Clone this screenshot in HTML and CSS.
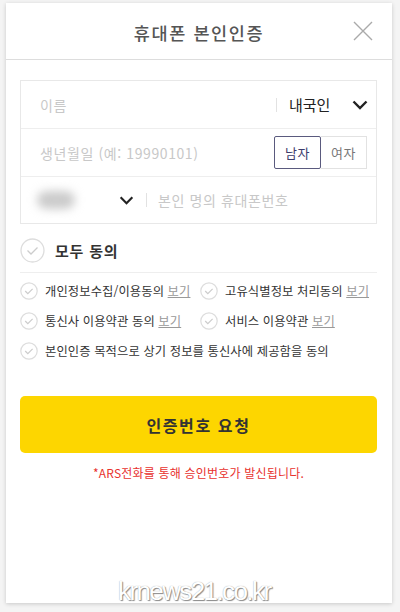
FILE: index.html
```html
<!DOCTYPE html>
<html lang="ko">
<head>
  <meta charset="UTF-8">
  <meta name="viewport" content="width=device-width, initial-scale=1.0">
  <title>휴대폰 본인인증</title>
  <link rel="stylesheet" href="styles.css">
</head>
<body>
  <div class="card">
    <div class="header">
      <h1>휴대폰 본인인증</h1>
      <span class="close">
        <svg width="20" height="20" viewBox="0 0 20 20"><path d="M1 1 L19 19 M19 1 L1 19" stroke="#aaa" stroke-width="1.4" fill="none"/></svg>
      </span>
    </div>
    <div class="content">
      <div class="form-box">
        <div class="row">
          <span class="placeholder name">이름</span>
          <span class="divider"></span>
          <span class="nation">내국인</span>
          <svg class="chev" width="16" height="10" viewBox="0 0 16 10"><path d="M1.5 1.5 L8 8 L14.5 1.5" stroke="#222" stroke-width="2.4" fill="none"/></svg>
        </div>
        <div class="row">
          <span class="placeholder birth">생년월일 (예: 19990101)</span>
          <div class="gender">
            <span class="g-btn on">남자</span>
            <span class="g-btn">여자</span>
          </div>
        </div>
        <div class="row">
          <span class="blob"></span>
          <svg class="chev small" width="15" height="9" viewBox="0 0 16 10"><path d="M1.5 1.5 L8 8 L14.5 1.5" stroke="#222" stroke-width="2.4" fill="none"/></svg>
          <span class="divider"></span>
          <span class="placeholder phone">본인 명의 휴대폰번호</span>
        </div>
      </div>

      <div class="agree-all">
        <svg class="check big" width="25" height="25" viewBox="0 0 25 25"><circle cx="12.5" cy="12.5" r="11.5" stroke="#ddd" stroke-width="1.3" fill="#fff"/><path d="M7.5 12.5 L11 16 L17.5 9.5" stroke="#ccc" stroke-width="1.3" fill="none"/></svg>
        <span>모두 동의</span>
      </div>

      <div class="terms">
        <div class="term"><svg class="check" width="18" height="18" viewBox="0 0 18 18"><circle cx="9" cy="9" r="8.2" stroke="#ddd" stroke-width="1.2" fill="#fff"/><path d="M5.2 9 L7.8 11.6 L12.6 6.8" stroke="#ccc" stroke-width="1.2" fill="none"/></svg><span>개인정보수집/이용동의 <a href="#">보기</a></span></div>
        <div class="term"><svg class="check" width="18" height="18" viewBox="0 0 18 18"><circle cx="9" cy="9" r="8.2" stroke="#ddd" stroke-width="1.2" fill="#fff"/><path d="M5.2 9 L7.8 11.6 L12.6 6.8" stroke="#ccc" stroke-width="1.2" fill="none"/></svg><span>고유식별정보 처리동의 <a href="#">보기</a></span></div>
        <div class="term"><svg class="check" width="18" height="18" viewBox="0 0 18 18"><circle cx="9" cy="9" r="8.2" stroke="#ddd" stroke-width="1.2" fill="#fff"/><path d="M5.2 9 L7.8 11.6 L12.6 6.8" stroke="#ccc" stroke-width="1.2" fill="none"/></svg><span>통신사 이용약관 동의 <a href="#">보기</a></span></div>
        <div class="term"><svg class="check" width="18" height="18" viewBox="0 0 18 18"><circle cx="9" cy="9" r="8.2" stroke="#ddd" stroke-width="1.2" fill="#fff"/><path d="M5.2 9 L7.8 11.6 L12.6 6.8" stroke="#ccc" stroke-width="1.2" fill="none"/></svg><span>서비스 이용약관 <a href="#">보기</a></span></div>
        <div class="term wide"><svg class="check" width="18" height="18" viewBox="0 0 18 18"><circle cx="9" cy="9" r="8.2" stroke="#ddd" stroke-width="1.2" fill="#fff"/><path d="M5.2 9 L7.8 11.6 L12.6 6.8" stroke="#ccc" stroke-width="1.2" fill="none"/></svg><span>본인인증 목적으로 상기 정보를 통신사에 제공함을 동의</span></div>
      </div>

      <button class="request">인증번호 요청</button>
      <p class="notice">*ARS전화를 통해 승인번호가 발신됩니다.</p>
    </div>
    <div class="watermark">krnews21.co.kr</div>
  </div>
</body>
</html>
```

FILE: styles.css
```css
* { box-sizing: border-box; }
body { margin: 0; padding: 3px 8px 0 6px; background-color: #f4f4f4; font-family: "Noto Sans CJK KR", "Noto Sans", sans-serif; height: 612px; overflow: hidden; }
.card { position: relative; background-color: #fff; height: 600px; box-shadow: 0 1px 4px rgba(0,0,0,0.18); }
.header { height: 57px; border-bottom: 1px solid #ddd; display: flex; align-items: center; justify-content: center; position: relative; }
.header h1 { margin: 0; font-size: 17.5px; font-weight: 500; color: #555; letter-spacing: 1.6px; padding-top: 2px; }
.header .close { position: absolute; right: 19px; top: 18px; }
.content { padding: 20px 15px 0 14px; }
.form-box { border: 1px solid #e8e8e8; }
.row { height: 48px; display: flex; align-items: center; border-bottom: 1px solid #eee; font-size: 14px; }
.row:last-child { border-bottom: none; height: 46px; }
.placeholder { color: #c8c8c8; letter-spacing: 0.6px; }
.name { margin-left: 19px; flex: 1; }
.divider { width: 1px; height: 14px; background-color: #e2e2e2; }
.nation { margin-left: 12px; color: #222; font-size: 15px; width: 63px; }
.chev { margin-right: 8px; }
.birth { margin-left: 19px; flex: 1; }
.gender { display: flex; margin-right: 9px; }
.g-btn { width: 46px; height: 33px; display: flex; align-items: center; justify-content: center; font-size: 13px; color: #777; border: 1px solid #e2e2e2; border-left: none; letter-spacing: 0.5px; }
.g-btn.on { width: 47px; color: #3c3c6c; border: 1px solid #5a5a7e; border-radius: 2px; }
.blob { width: 38px; height: 18px; margin-left: 16px; background-color: #cbcbcb; border-radius: 9px; filter: blur(5px); }
.chev.small { margin-left: 44px; margin-right: 12px; }
.phone { margin-left: 11px; }
.agree-all { height: 49px; display: flex; align-items: center; gap: 10px; border-bottom: 1px solid #eee; font-size: 15px; font-weight: 700; color: #333; padding-top: 4px; letter-spacing: 0.8px; }
.terms { display: grid; grid-template-columns: 180px 1fr; row-gap: 12px; padding-top: 9px; }
.term { display: flex; align-items: center; gap: 7px; font-size: 12.3px; color: #333; height: 18px; white-space: nowrap; letter-spacing: 0.1px; }
.term.wide { grid-column: 1 / 3; }
.term a { color: #999; text-decoration: underline; }
.request { display: block; width: 100%; height: 57px; margin-top: 36px; border: none; border-radius: 5px; background-color: #fdd600; font-family: inherit; font-size: 16px; font-weight: 700; color: #333; letter-spacing: 1.6px; }
.notice { margin: 11px 0 0; text-align: center; font-size: 12px; color: #e8322e; letter-spacing: 0.2px; }
.watermark { position: absolute; left: 112px; bottom: -4px; font-family: "Liberation Sans", Arial, sans-serif; font-size: 26px; letter-spacing: -1.6px; color: #fff; text-shadow: 1px 1px 1px #888, 0 0 1px #999; }
```
